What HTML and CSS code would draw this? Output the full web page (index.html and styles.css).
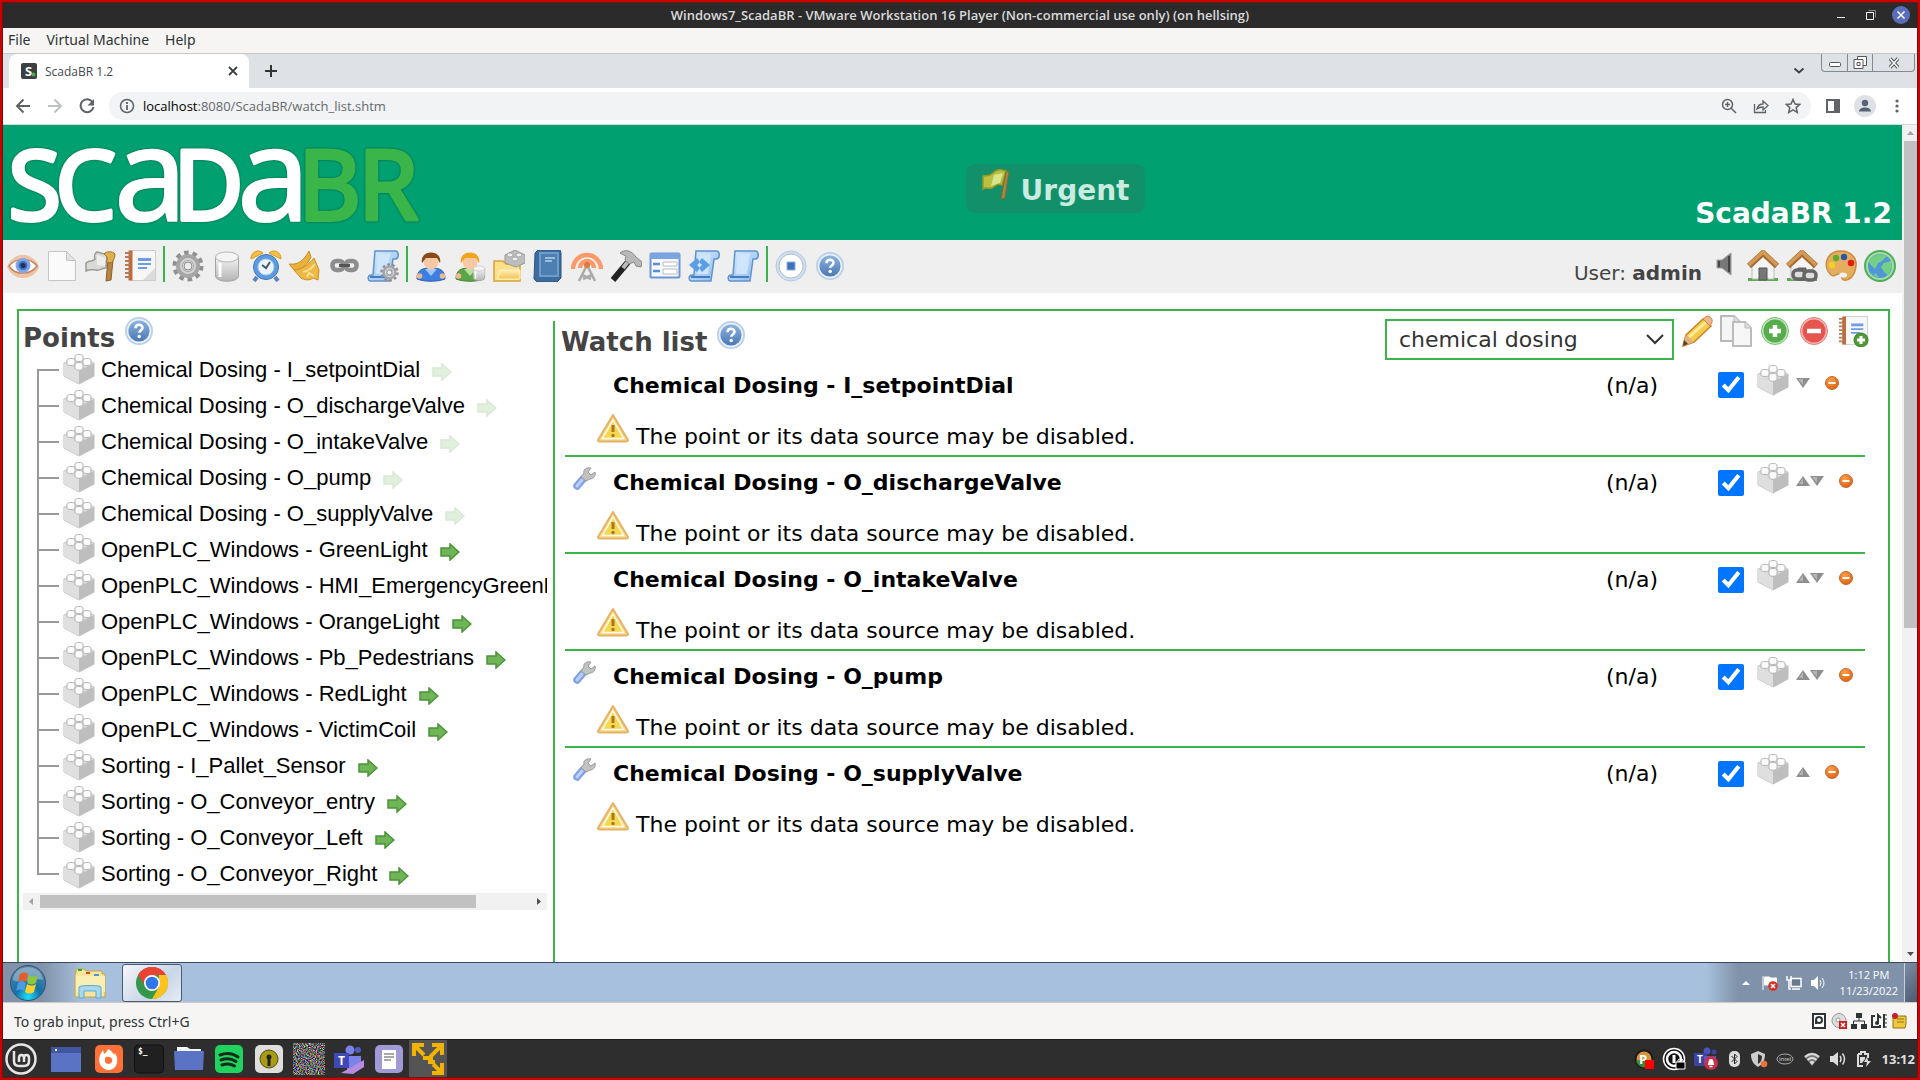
FILE: index.html
```html
<!DOCTYPE html>
<html lang="en">
<head>
<meta charset="utf-8">
<title>ScadaBR 1.2</title>
<link rel="stylesheet" href="styles.css">
</head>
<body>
<svg class="sprite" aria-hidden="true">
<defs>
<linearGradient id="gGray" x1="0" y1="0" x2="0" y2="1"><stop offset="0" stop-color="#f4f4f4"/><stop offset="1" stop-color="#b4b4b4"/></linearGradient>
<linearGradient id="gBlue" x1="0" y1="0" x2="1" y2="1"><stop offset="0" stop-color="#d9ecfd"/><stop offset="1" stop-color="#8dbcec"/></linearGradient>
<linearGradient id="gGold" x1="0" y1="0" x2="0" y2="1"><stop offset="0" stop-color="#fdeebb"/><stop offset="1" stop-color="#f3c34b"/></linearGradient>
<linearGradient id="gHelp" x1="0" y1="0" x2="0" y2="1"><stop offset="0" stop-color="#8db3de"/><stop offset="1" stop-color="#4a78b4"/></linearGradient>
<radialGradient id="gOrb" cx=".5" cy=".9" r=".9"><stop offset="0" stop-color="#1fe0ff"/><stop offset=".4" stop-color="#1272a8"/><stop offset="1" stop-color="#5f86a5"/></radialGradient>
<radialGradient id="gOrange" cx=".4" cy=".3" r=".8"><stop offset="0" stop-color="#ffa04a"/><stop offset="1" stop-color="#d95a08"/></radialGradient>
<filter id="fNoise" x="0" y="0" width="100%" height="100%" color-interpolation-filters="sRGB"><feTurbulence type="fractalNoise" baseFrequency=".9" numOctaves="2" seed="4"/><feColorMatrix values="2.2 0 0 0 -.7 0 2.2 0 0 -.7 0 0 2.2 0 -.7 0 0 0 0 1"/></filter>
<symbol id="brick" viewBox="0 0 32 32"><path d="M1 9 16 3l15 6v13l-15 8L1 22z" fill="#d6d6d6" stroke="#bcbcbc"/><path d="M16 16v14L1 22V9z" fill="#dfdfdf"/><path d="M16 16v14l15-8V9z" fill="#bebebe"/><path d="M1 9 16 2l15 7-15 8z" fill="#d9d9d9"/><g fill="#fbfbfb" stroke="#b4b4b4"><path d="M12 2v4c0 2 8 2 8 0V2c0-2-8-2-8 0z"/><path d="M4 6v4c0 2 8 2 8 0V6c0-2-8-2-8 0zM20 6v4c0 2 8 2 8 0V6c0-2-8-2-8 0zM12 10v4c0 3 8 3 8 0v-4c0-2-8-2-8 0z"/></g></symbol>
<symbol id="help" viewBox="0 0 32 32"><circle cx="16" cy="16" r="14" fill="#b9cfe8"/><circle cx="16" cy="16" r="12.300" fill="#e8f0fa"/><circle cx="16" cy="16" r="10.600" fill="url(#gHelp)"/><path d="M12.500 13.200c0-4.600 7-4.400 7-.4 0 2.600-3.300 2.600-3.300 5" fill="none" stroke="#fff" stroke-width="2.600"/><circle cx="16.200" cy="21.500" r="1.700" fill="#fff"/></symbol>
<symbol id="eye" viewBox="0 0 32 32"><path d="M0 17C4 8 11 4 18 5c7 1 12 6 14 12-2 6-8 11-16 11S3 23 0 17z" fill="#ecc3a5"/><path d="M2 16C8 8 23 7 30 16c-6 9-22 10-28 0z" fill="#fff" stroke="#c98561" stroke-width="1.500"/><circle cx="16" cy="15.500" r="7.500" fill="#7fa6e6"/><circle cx="16" cy="15.500" r="4.500" fill="#446fc0"/><circle cx="16" cy="15.500" r="2.500" fill="#1b2f62"/></symbol>
<symbol id="page" viewBox="0 0 32 32"><path d="M2.500 1.500h18l9 9v20h-27z" fill="#fafafa" stroke="#c4c4c4"/><path d="M20.500 1.500v9h9z" fill="#e2e2e2" stroke="#c4c4c4"/></symbol>
<symbol id="flag" viewBox="0 0 32 32"><path d="M1 13c5-4 5 0 9-4-1-3 0-6 2-7 3 1 6 2 10 2l-1 14c-4 0-6 3-10 2-4 0-6-1-10 1z" fill="#d9d9d6" stroke="#9b9b96" stroke-width="1.500"/><path d="m12 5 9 3-1 8-8-1z" fill="#ededeb"/><path d="M23 10h5l-2 20-5 1z" fill="#b5843f" stroke="#8c6029"/><path d="M19 4c2-3 9-3 11 0 0 4-2 7-4 9l-5-1c2-3 2-5-2-8z" fill="#dfb04f" stroke="#a0752d"/></symbol>
<symbol id="yellowflag" viewBox="0 0 32 32"><path d="M2 7c4-1 6 1 10-3s7-4 13-2l-4 14c-4-2-6 0-10 3-3 1-6-1-9 1z" fill="#b9c042" stroke="#969a22" stroke-width="1.500"/><path d="m13 6 9-2-3 10-9 3z" fill="#d8e48e"/><path d="M25 3 28 2l-4 27-4 1z" fill="#a98746" stroke="#7b6f2e"/></symbol>
<symbol id="report" viewBox="0 0 32 32"><path d="M7.500.5h24v30h-24z" fill="#f7f7f7" stroke="#ccc"/><path d="M4.500.5h4v30h-4z" fill="#bd6a3c"/><path d="M1 3h5M1 7h5M1 11h5M1 15h5M1 19h5M1 23h5M1 27h5" stroke="#b77b5a" stroke-width="2"/><path d="M14 8h13v3H14zm0 5h13v2H14zm0 4h9v2h-9z" fill="#6e9ce4"/><path d="m19 30 12-12v12z" fill="#dcdcdc"/></symbol>
<symbol id="gear" viewBox="0 0 32 32"><circle cx="16" cy="16" r="12.500" fill="none" stroke="#909090" stroke-width="6" stroke-dasharray="4.200 3.650"/><circle cx="16" cy="16" r="8.500" fill="none" stroke="#a6a6a6" stroke-width="7"/><circle cx="16" cy="16" r="7" fill="none" stroke="#d4d4d4" stroke-width="2"/><circle cx="16" cy="16" r="4" fill="#ededed" stroke="#888"/></symbol>
<symbol id="cylinder" viewBox="0 0 32 32"><path d="M4.500 7v19c0 7 23 7 23 0V7z" fill="url(#gGray)" stroke="#a5a5a5"/><ellipse cx="16" cy="7" rx="11.500" ry="5" fill="#f5f5f5" stroke="#b5b5b5"/><path d="M9 13v14" stroke="#fff" stroke-width="3"/></symbol>
<symbol id="clock" viewBox="0 0 32 32"><path d="m7 27-3 4M25 27l3 4" stroke="#5d86bd" stroke-width="4"/><path d="M1 9C1 1 9-1 13 3zM31 9C31 1 23-1 19 3z" fill="#f5c043" stroke="#d99a1d"/><circle cx="16" cy="17" r="12.500" fill="#5d9be0" stroke="#3f76b8"/><circle cx="16" cy="17" r="8" fill="#e9f4fd" stroke="#a9cbed"/><path d="m12 15 4 3 4-6" fill="none" stroke="#48586b" stroke-width="2"/></symbol>
<symbol id="horn" viewBox="0 0 32 32"><path d="M0 14c8 1 14-2 20-13l2 6c-4 9-10 12-16 14z" fill="#e9b03c" stroke="#c98d20"/><path d="M5 20c9-1 14-5 20-12l5 12-1 10-5-2c-4 3-8 2-12 0z" fill="#edb844" stroke="#cc8f20"/><path d="M14 22c6-1 9-4 12-8M18 27l2-4 5 3" fill="none" stroke="#fbe09a" stroke-width="2"/></symbol>
<symbol id="link" viewBox="0 0 32 32"><g fill="none" stroke="#8d8d8d" stroke-width="4.500"><rect x="4.500" y="11" width="11" height="9" rx="4"/><rect x="17.500" y="11" width="11" height="9" rx="4"/></g><path d="M11 15.500h11" stroke="#555" stroke-width="3"/></symbol>
<symbol id="scroll" viewBox="0 0 32 32"><path d="M8 1h21c3 1 3 7 0 8h-3l-3 22H3c-3-1-2-6 1-6h2z" fill="url(#gBlue)" stroke="#5d93cf" stroke-width="1.500"/><path d="M11 4h12l-3 20H9z" fill="#cfe5fb"/><path d="M3 27h19" stroke="#447cc0" stroke-width="2"/></symbol>
<symbol id="scrollgear" viewBox="0 0 32 32"><use href="#scroll"/><use href="#gear" x="13" y="13" width="19" height="19"/></symbol>
<symbol id="scrollcode" viewBox="0 0 32 32"><use href="#scroll"/><path d="m9 8-8 7 8 7 3-4-3-3 3-3zM14 8l8 7-8 7-3-4 3-3-3-3z" fill="#5a9fe6"/></symbol>
<symbol id="user" viewBox="0 0 32 32"><path d="M2 29c0-9 5-11 14-11s14 2 14 11c-8 3-20 3-28 0z" fill="#3c7fe0" stroke="#2b61b4"/><path d="m10 19 6 7 6-7z" fill="#9fc9fb"/><circle cx="4.500" cy="26" r="2.800" fill="#f0b890"/><circle cx="27.500" cy="26" r="2.800" fill="#f0b890"/><ellipse cx="16" cy="11.500" rx="7.500" ry="8" fill="#f6c8a4"/><path d="M7 13C4-1 28-1 25 13l-3-5H11z" fill="#8a4a1a"/></symbol>
<symbol id="userdb" viewBox="0 0 32 32"><path d="M2 29c0-9 5-11 14-11s14 2 14 11c-8 3-20 3-28 0z" fill="#5ca548" stroke="#43822f"/><path d="m10 19 6 7 6-7z" fill="#b7e29c"/><circle cx="4.500" cy="26" r="2.800" fill="#f0b890"/><ellipse cx="16" cy="11.500" rx="7.500" ry="8" fill="#f6c8a4"/><path d="M7 13C4-1 28-1 25 13l-3-5H11z" fill="#f0a51e"/><use href="#cylinder" x="17" y="14" width="16" height="18"/></symbol>
<symbol id="folder" viewBox="0 0 32 32"><path d="M1 31V11h9l3 3h14v17z" fill="#fbe08a" stroke="#d7a43a" stroke-width="1.500"/><path d="M7 20h20v9H5z" fill="url(#gGold)" stroke="#fff3c4"/><path d="M12 5l10-5 10 5v8l-9 4-11-4z" fill="#bdbdbd" stroke="#999"/><g fill="#efefef" stroke="#aaa"><ellipse cx="17" cy="5" rx="3" ry="2"/><ellipse cx="26" cy="5" rx="3" ry="2"/><ellipse cx="22" cy="9" rx="3" ry="2"/></g></symbol>
<symbol id="book" viewBox="0 0 32 32"><path d="M3 3 6 0h22l1 3v25l-4 4H5l-3-3z" fill="#3e6c9f" stroke="#2c5584"/><path d="M7 2h20v25H7z" fill="#6e9cca"/><path d="M9 4h16v21H9z" fill="#4d7fb3"/><path d="M13 8h10M13 11h7" stroke="#b7d3ec" stroke-width="1.500"/></symbol>
<symbol id="antenna" viewBox="0 0 32 32"><path d="M2 19a14 14 0 1 1 28 0M9 18a7 7 0 1 1 14 0" fill="none" stroke="#fb9a68" stroke-width="4.500"/><path d="m8 31 8-16 8 16M11 25l9 4M21 25l-9 4" fill="none" stroke="#aaa" stroke-width="2.500"/><circle cx="16" cy="15" r="3" fill="#e07841"/></symbol>
<symbol id="hammer" viewBox="0 0 32 32"><path d="M18 12 3 30" stroke="#222" stroke-width="6"/><path d="m20 9-7 9" stroke="#bbb" stroke-width="4"/><path d="M10 3c5-4 11-3 16 4l6 5-1 5-5-1-2-4-5 2-4-4 1-4z" fill="#b9b9b9" stroke="#888"/></symbol>
<symbol id="form" viewBox="0 0 32 32"><rect x="1.500" y="3.500" width="29" height="24" rx="1" fill="#f5f9fe" stroke="#6b96d4" stroke-width="2"/><path d="M1 3h30v6H1z" fill="#7ba4e0"/><path d="M4 14h7M4 21h7" stroke="#5d8ad0" stroke-width="2.500"/><path d="M14 12h14v4H14zM14 19h14v5H14z" fill="#fff" stroke="#bbb"/></symbol>
<symbol id="stop" viewBox="0 0 32 32"><circle cx="16" cy="16" r="15" fill="#cfdff3" stroke="#b1c9e8"/><circle cx="16" cy="16" r="12" fill="#fff" stroke="#b9b9b9"/><path d="M12 12h8v8h-8z" fill="#3f72b8" stroke="#8db0dd"/></symbol>
<symbol id="speaker" viewBox="0 0 24 24"><path d="M3 8h5l9-7v22l-9-7H3z" fill="#777" stroke="#999"/><path d="M15 4v16M5 9v6" stroke="#444" stroke-width="2"/></symbol>
<symbol id="home" viewBox="0 0 32 32"><path d="M1 28h30v3H1z" fill="#5da850"/><path d="M5 14 16 4l11 10v15H5z" fill="#f4f4f4" stroke="#bbb"/><path d="M12 18h8v12h-8z" fill="#777" stroke="#555"/><path d="M2 16 16 3l14 13" fill="none" stroke="#a66d32" stroke-width="6"/><path d="M2 15 16 2l14 13" fill="none" stroke="#d39a56" stroke-width="3.500"/></symbol>
<symbol id="homelink" viewBox="0 0 32 32"><use href="#home"/><g fill="#ddd" stroke="#666" stroke-width="3.500"><rect x="7" y="20" width="12" height="9" rx="4"/><rect x="18" y="21" width="12" height="9" rx="4"/></g></symbol>
<symbol id="palette" viewBox="0 0 32 32"><path d="M16 1c10 0 16 7 15 15-1 10-7 15-12 14-4-1-1-5-4-6-5-1-5 4-9 1-9-8-5-24 10-24z" fill="#e5ad60" stroke="#c88c3c" stroke-width="1.500"/><circle cx="11" cy="8" r="3.200" fill="#5cae2a"/><circle cx="19" cy="7" r="3.200" fill="#2c55a8"/><circle cx="26" cy="13" r="3.300" fill="#e51c16"/><circle cx="7" cy="15" r="3.200" fill="#efd122"/><ellipse cx="18" cy="25" rx="4" ry="2.500" fill="#efefef"/></symbol>
<symbol id="globe" viewBox="0 0 32 32"><circle cx="16" cy="16" r="15" fill="#a5dba5" stroke="#4fae58" stroke-width="2"/><circle cx="16" cy="16" r="12" fill="#4f97d6"/><path d="M5 11c4-7 12-8 18-5l-5 5-4 2-3 6-5-5zM20 13l7-2 1 6-4 8-4-3-3-5zM11 23l4 4-5-1z" fill="#74d084"/></symbol>
<symbol id="pencil" viewBox="0 0 32 32"><path d="M2 31 5 20 22 4l8 7-17 16z" fill="#f6cb4c" stroke="#c8842c" stroke-width="1.500"/><path d="m8 22 17-15" stroke="#fdeb9e" stroke-width="3"/><path d="m22 4 4-3c3 0 6 3 5 6l-2 4z" fill="#f0b68b" stroke="#c48450"/><path d="m2 31 3-11 8 7z" fill="#dfb283"/><path d="m2 31 1-6 4 4z" fill="#5c3b20"/></symbol>
<symbol id="copy" viewBox="0 0 32 32"><path d="M1 1h13l6 6v19H1z" fill="#f5f5f5" stroke="#b9b9b9" stroke-width="2"/><path d="M14 1v6h6" fill="#ddd" stroke="#bbb"/><path d="M13 7h12l6 6v18H13z" fill="#f7f7f7" stroke="#bcbcbc" stroke-width="2"/><path d="M25 7v6h6" fill="#ddd" stroke="#bbb"/></symbol>
<symbol id="plus" viewBox="0 0 32 32"><circle cx="16" cy="16" r="13.500" fill="#c5e6c0" stroke="#7cbf74"/><circle cx="16" cy="16" r="11.500" fill="#57ad4b"/><path d="M16 10v12M10 16h12" stroke="#fff" stroke-width="4.500"/></symbol>
<symbol id="minus" viewBox="0 0 32 32"><circle cx="16" cy="16" r="13.500" fill="#f6b8b4" stroke="#e57e78"/><circle cx="16" cy="16" r="11.500" fill="#e5554e"/><path d="M9 16h14" stroke="#fff" stroke-width="4.500"/></symbol>
<symbol id="reportadd" viewBox="0 0 32 32"><use href="#report" x="1" width="30" height="32"/><circle cx="24" cy="25" r="7" fill="#4f9a35" stroke="#3d7f28"/><path d="M24 21v8M20 25h8" stroke="#fff" stroke-width="3"/></symbol>
<symbol id="warning" viewBox="0 0 32 32"><path d="M16 3 31 28q0 1.500-2 1.500H3q-2 0-2-1.500z" fill="#f8d98e" stroke="#e6b263" stroke-width="2" stroke-linejoin="round"/><path d="M16 8 26.500 26.500h-21z" fill="#f6d752" stroke="#fffbe6" stroke-width="1.500"/><path d="M16 13v7" stroke="#a97720" stroke-width="3"/><circle cx="16" cy="23.500" r="1.700" fill="#a97720"/></symbol>
<symbol id="wrench" viewBox="0 0 24 24"><path d="m5 19 6-7" stroke="#7fa1e8" stroke-width="7.500" stroke-linecap="round"/><path d="m5 19 5-6" stroke="#bcd0f8" stroke-width="3" stroke-linecap="round"/><path d="m9 10 5 4 4-2c4 0 6-4 5-7l-4 3-3-3 3-4c-5-1-8 2-7 5z" fill="#c2c2c2" stroke="#999"/></symbol>
<symbol id="arrow" viewBox="0 0 20 18"><path d="M1 5h9V1l9 8-9 8v-4H1z" fill="#6fb558" stroke="#4a9436" stroke-width="1.500"/></symbol>
<symbol id="up" viewBox="0 0 14 14"><path d="m0 12 7-10 7 10z" fill="#8e8e8e"/><path d="m3 10 4-6v6z" fill="#b4b4b4"/></symbol>
<symbol id="down" viewBox="0 0 14 14"><path d="m0 2 7 10 7-10z" fill="#8e8e8e"/><path d="M2 3h5v6z" fill="#b4b4b4"/></symbol>
<symbol id="remove" viewBox="0 0 14 14"><circle cx="7" cy="7" r="6.500" fill="url(#gOrange)" stroke="#c46a36"/><path d="M3.500 7h7" stroke="#fff" stroke-width="2"/></symbol>
</defs>
</svg>

<header class="titlebar">
  <span class="titlebar-text">Windows7_ScadaBR - VMware Workstation 16 Player (Non-commercial use only) (on hellsing)</span>
  <div class="window-buttons">
    <button aria-label="Minimize"><svg width="18" height="18" viewBox="0 0 18 18"><path d="M5 11.500h8" stroke="#eee"/></svg></button>
    <button aria-label="Restore"><svg width="18" height="18" viewBox="0 0 18 18"><path d="M6.500 4.500h7v7" fill="none" stroke="#888"/><path d="M4.500 6.500h7v7h-7z" fill="none" stroke="#fff"/></svg></button>
    <button aria-label="Close"><svg width="18" height="18" viewBox="0 0 18 18"><circle cx="9" cy="9" r="9" fill="#5b6cb8"/><path d="m5.500 5.500 7 7m0-7-7 7" stroke="#fff" stroke-width="1.500"/></svg></button>
  </div>
</header>

<nav class="menubar"><button>File</button><button>Virtual Machine</button><button>Help</button></nav>

<div class="tabstrip">
  <div class="tab">
    <svg width="16" height="16" viewBox="0 0 16 16"><rect width="16" height="16" rx="2" fill="#3c4043"/><text x="4" y="13" class="favicon-letter">S</text><circle cx="12.500" cy="11.500" r="2" fill="#3fb54a"/></svg>
    <span class="tab-title">ScadaBR 1.2</span>
    <button aria-label="Close tab"><svg width="10" height="10" viewBox="0 0 10 10"><path d="m1 1 8 8m0-8L1 9" stroke="#3c4043" stroke-width="1.800"/></svg></button>
  </div>
  <button class="newtab" aria-label="New tab"><svg width="12" height="12" viewBox="0 0 12 12"><path d="M6 0v12M0 6h12" stroke="#333" stroke-width="2"/></svg></button>
  <button class="tabsearch" aria-label="Search tabs"><svg width="12" height="8" viewBox="0 0 12 8"><path d="m1.500 1.500 4.500 4 4.500-4" fill="none" stroke="#444" stroke-width="2"/></svg></button>
  <div class="guest-buttons">
    <button aria-label="Minimize"><svg width="12" height="12" viewBox="0 0 12 12"><rect x=".5" y="5.500" width="11" height="4" rx="1" fill="#fff" stroke="#555"/></svg></button>
    <button aria-label="Restore"><svg width="14" height="14" viewBox="0 0 14 14"><path d="M4.500.5h9v9h-9z" fill="#fff" stroke="#555"/><path d="M1 3.500h9v9H1z" fill="#fff" stroke="#555"/><path d="M4 6.500h3v3H4z" fill="#fff" stroke="#555"/></svg></button>
    <button aria-label="Close"><svg width="12" height="12" viewBox="0 0 12 12"><path d="m2 1.500 8 9m0-9-8 9" stroke="#555" stroke-width="3.500"/><path d="m2 1.500 8 9m0-9-8 9" stroke="#fff" stroke-width="1.500"/></svg></button>
  </div>
</div>

<div class="addressbar">
  <button aria-label="Back"><svg width="16" height="16" viewBox="0 0 16 16"><path d="M15 8H2m6.500-6.500L2 8l6.500 6.500" fill="none" stroke="#5f6368" stroke-width="2"/></svg></button>
  <button aria-label="Forward"><svg width="16" height="16" viewBox="0 0 16 16"><path d="M1 8h13M7.500 1.500 14 8l-6.500 6.500" fill="none" stroke="#bdc1c6" stroke-width="2"/></svg></button>
  <button aria-label="Reload"><svg width="16" height="16" viewBox="0 0 16 16"><path d="M13.500 4A6.500 6.500 0 1 0 14.500 9" fill="none" stroke="#5f6368" stroke-width="2"/><path d="M15 1v6.500H8.500z" fill="#5f6368"/></svg></button>
  <div class="omnibox">
    <svg width="16" height="16" viewBox="0 0 16 16"><circle cx="8" cy="8" r="6.500" fill="none" stroke="#5f6368" stroke-width="1.500"/><path d="M8 7v5M8 4v2" stroke="#5f6368" stroke-width="1.800"/></svg>
    <a class="url" href="#"><span>localhost</span>:8080/ScadaBR/watch_list.shtm</a>
    <div class="omnibox-actions">
      <button aria-label="Zoom"><svg width="16" height="16" viewBox="0 0 16 16"><circle cx="6.500" cy="6.500" r="5" fill="none" stroke="#5f6368" stroke-width="1.500"/><path d="m10 10 5 5M6.500 4v5M4 6.500h5" stroke="#5f6368" stroke-width="1.500"/></svg></button>
      <button aria-label="Share"><svg width="16" height="16" viewBox="0 0 16 16"><path d="M1.500 6v8.500h11V12M4 11c1-4 3-5 6-5V3l5 4.500-5 4.500V9c-3 0-4 .5-6 2z" fill="none" stroke="#5f6368" stroke-width="1.300"/></svg></button>
      <button aria-label="Bookmark"><svg width="16" height="16" viewBox="0 0 16 16"><path d="m8 1.500 2 4.500 4.800.400-3.600 3.200 1.100 4.800L8 11.900l-4.300 2.500 1.100-4.800L1.200 6.400 6 6z" fill="none" stroke="#5f6368" stroke-width="1.500"/></svg></button>
    </div>
  </div>
  <div class="browser-actions">
    <button aria-label="Side panel"><svg width="16" height="16" viewBox="0 0 16 16"><path d="M2 2h12v12H2z" fill="#fff" stroke="#5f6368" stroke-width="2"/><path d="M9 1h6v14H9z" fill="#5f6368"/></svg></button>
    <button aria-label="Profile"><svg width="22" height="22" viewBox="0 0 22 22"><circle cx="11" cy="11" r="11" fill="#dee1e6"/><circle cx="11" cy="8" r="3.200" fill="#566276"/><path d="M5 16.500c0-5.500 12-5.500 12 0z" fill="#566276"/></svg></button>
    <button aria-label="More"><svg width="16" height="16" viewBox="0 0 16 16" fill="#5f6368"><circle cx="8" cy="3" r="1.600"/><circle cx="8" cy="8" r="1.600"/><circle cx="8" cy="13" r="1.600"/></svg></button>
  </div>
</div>

<div class="viewport">
  <main class="page">
    <div class="banner">
      <svg class="logo" width="406" height="82" viewBox="0 0 406 82" role="img" aria-label="ScadaBR">
        <g class="logo-white"><text y="75" x="-1">S</text><text y="75" x="46">C</text><text class="logo-a" y="76" x="105">a</text><text y="75" x="164">D</text><text class="logo-a" y="76" x="228">a</text></g>
        <g class="logo-green"><text y="75" x="289">B</text><text y="75" x="349">R</text></g>
      </svg>
      <a class="urgent" href="#"><svg width="32" height="32"><use href="#yellowflag"/></svg><span>Urgent</span></a>
      <span class="product">ScadaBR 1.2</span>
    </div>

    <div class="toolbar">
      <a href="#" title="Watch list"><svg class="icon"><use href="#eye"/></svg></a>
      <a href="#" title="Views"><svg class="icon"><use href="#page"/></svg></a>
      <a href="#" title="Alarms"><svg class="icon"><use href="#flag"/></svg></a>
      <a href="#" title="Reports"><svg class="icon"><use href="#report"/></svg></a>
      <span class="separator"></span>
      <a href="#" title="Event handlers"><svg class="icon"><use href="#gear"/></svg></a>
      <a href="#" title="Data sources"><svg class="icon"><use href="#cylinder"/></svg></a>
      <a href="#" title="Scheduled events"><svg class="icon"><use href="#clock"/></svg></a>
      <a href="#" title="Compound events"><svg class="icon"><use href="#horn"/></svg></a>
      <a href="#" title="Point links"><svg class="icon"><use href="#link"/></svg></a>
      <a href="#" title="Scripting"><svg class="icon"><use href="#scrollgear"/></svg></a>
      <span class="separator"></span>
      <a href="#" title="Users"><svg class="icon"><use href="#user"/></svg></a>
      <a href="#" title="User profiles"><svg class="icon"><use href="#userdb"/></svg></a>
      <a href="#" title="Point hierarchy"><svg class="icon"><use href="#folder"/></svg></a>
      <a href="#" title="Mailing lists"><svg class="icon"><use href="#book"/></svg></a>
      <a href="#" title="Publishers"><svg class="icon"><use href="#antenna"/></svg></a>
      <a href="#" title="Maintenance"><svg class="icon"><use href="#hammer"/></svg></a>
      <a href="#" title="System settings"><svg class="icon"><use href="#form"/></svg></a>
      <a href="#" title="Import and export"><svg class="icon"><use href="#scrollcode"/></svg></a>
      <a href="#" title="SQL"><svg class="icon"><use href="#scroll"/></svg></a>
      <span class="separator"></span>
      <a href="#" title="Logout"><svg class="icon"><use href="#stop"/></svg></a>
      <a href="#" title="Help"><svg class="icon"><use href="#help"/></svg></a>
      <span class="user">User: <b>admin</b></span>
      <button class="mute" aria-label="Mute"><svg width="24" height="24"><use href="#speaker"/></svg></button>
      <a href="#" title="Home"><svg class="icon"><use href="#home"/></svg></a>
      <a href="#" title="Set home"><svg class="icon"><use href="#homelink"/></svg></a>
      <a href="#" title="Theme"><svg class="icon"><use href="#palette"/></svg></a>
      <a href="#" title="Language"><svg class="icon"><use href="#globe"/></svg></a>
    </div>

    <div class="panel">
      <section class="points">
        <div class="heading"><h2>Points</h2><button aria-label="Points help"><svg class="icon"><use href="#help"/></svg></button></div>
        <ul class="tree">
          <li><i class="branch"></i><svg class="icon"><use href="#brick"/></svg><span>Chemical Dosing - I_setpointDial</span><button class="add" disabled aria-label="Add"><svg><use href="#arrow"/></svg></button></li>
          <li><i class="branch"></i><svg class="icon"><use href="#brick"/></svg><span>Chemical Dosing - O_dischargeValve</span><button class="add" disabled aria-label="Add"><svg><use href="#arrow"/></svg></button></li>
          <li><i class="branch"></i><svg class="icon"><use href="#brick"/></svg><span>Chemical Dosing - O_intakeValve</span><button class="add" disabled aria-label="Add"><svg><use href="#arrow"/></svg></button></li>
          <li><i class="branch"></i><svg class="icon"><use href="#brick"/></svg><span>Chemical Dosing - O_pump</span><button class="add" disabled aria-label="Add"><svg><use href="#arrow"/></svg></button></li>
          <li><i class="branch"></i><svg class="icon"><use href="#brick"/></svg><span>Chemical Dosing - O_supplyValve</span><button class="add" disabled aria-label="Add"><svg><use href="#arrow"/></svg></button></li>
          <li><i class="branch"></i><svg class="icon"><use href="#brick"/></svg><span>OpenPLC_Windows - GreenLight</span><button class="add" aria-label="Add"><svg><use href="#arrow"/></svg></button></li>
          <li><i class="branch"></i><svg class="icon"><use href="#brick"/></svg><span>OpenPLC_Windows - HMI_EmergencyGreenLight</span><button class="add" aria-label="Add"><svg><use href="#arrow"/></svg></button></li>
          <li><i class="branch"></i><svg class="icon"><use href="#brick"/></svg><span>OpenPLC_Windows - OrangeLight</span><button class="add" aria-label="Add"><svg><use href="#arrow"/></svg></button></li>
          <li><i class="branch"></i><svg class="icon"><use href="#brick"/></svg><span>OpenPLC_Windows - Pb_Pedestrians</span><button class="add" aria-label="Add"><svg><use href="#arrow"/></svg></button></li>
          <li><i class="branch"></i><svg class="icon"><use href="#brick"/></svg><span>OpenPLC_Windows - RedLight</span><button class="add" aria-label="Add"><svg><use href="#arrow"/></svg></button></li>
          <li><i class="branch"></i><svg class="icon"><use href="#brick"/></svg><span>OpenPLC_Windows - VictimCoil</span><button class="add" aria-label="Add"><svg><use href="#arrow"/></svg></button></li>
          <li><i class="branch"></i><svg class="icon"><use href="#brick"/></svg><span>Sorting - I_Pallet_Sensor</span><button class="add" aria-label="Add"><svg><use href="#arrow"/></svg></button></li>
          <li><i class="branch"></i><svg class="icon"><use href="#brick"/></svg><span>Sorting - O_Conveyor_entry</span><button class="add" aria-label="Add"><svg><use href="#arrow"/></svg></button></li>
          <li><i class="branch"></i><svg class="icon"><use href="#brick"/></svg><span>Sorting - O_Conveyor_Left</span><button class="add" aria-label="Add"><svg><use href="#arrow"/></svg></button></li>
          <li><i class="branch"></i><svg class="icon"><use href="#brick"/></svg><span>Sorting - O_Conveyor_Right</span><button class="add" aria-label="Add"><svg><use href="#arrow"/></svg></button></li>
        </ul>
        <div class="hscroll"><svg width="17" height="17" viewBox="0 0 17 17"><path d="M10 5v7L6 8.500z" fill="#a3a3a3"/></svg><div class="hscroll-track"><div class="hscroll-thumb"></div></div><svg width="17" height="17" viewBox="0 0 17 17"><path d="M7 5v7l4-3.500z" fill="#505050"/></svg></div>
      </section>
      <div class="divider"></div>
      <section class="watch">
        <div class="watch-head">
          <div class="heading"><h2>Watch list</h2><button aria-label="Watch list help"><svg class="icon"><use href="#help"/></svg></button></div>
          <div class="picker">
            <select aria-label="Watch list"><option>chemical dosing</option></select>
            <svg width="18" height="12" viewBox="0 0 18 12"><path d="m1 2 8 8 8-8" fill="none" stroke="#333" stroke-width="2"/></svg>
          </div>
          <div class="actions">
            <button aria-label="Rename"><svg class="icon"><use href="#pencil"/></svg></button>
            <button aria-label="Copy"><svg class="icon"><use href="#copy"/></svg></button>
            <button aria-label="Add list"><svg class="icon"><use href="#plus"/></svg></button>
            <button aria-label="Delete list"><svg class="icon"><use href="#minus"/></svg></button>
            <button aria-label="Create report"><svg class="icon"><use href="#reportadd"/></svg></button>
          </div>
        </div>
        <table class="watch-table">
          <colgroup><col class="col-tool"><col><col class="col-value"><col class="col-check"><col class="col-icons"></colgroup>
          <tbody>
            <tr class="point"><td></td><th scope="row">Chemical Dosing - I_setpointDial</th><td>(n/a)</td><td><input type="checkbox" checked aria-label="Chart I_setpointDial"></td><td class="tools"><div><svg class="icon"><use href="#brick"/></svg><button aria-label="Move down"><svg><use href="#down"/></svg></button><button class="remove" aria-label="Remove"><svg><use href="#remove"/></svg></button></div></td></tr>
            <tr class="note"><td colspan="5"><div><svg class="icon"><use href="#warning"/></svg>The point or its data source may be disabled.</div></td></tr>
          </tbody>
          <tbody>
            <tr class="point"><td class="tool"><button aria-label="Set value"><svg><use href="#wrench"/></svg></button></td><th scope="row">Chemical Dosing - O_dischargeValve</th><td>(n/a)</td><td><input type="checkbox" checked aria-label="Chart O_dischargeValve"></td><td class="tools"><div><svg class="icon"><use href="#brick"/></svg><button aria-label="Move up"><svg><use href="#up"/></svg></button><button aria-label="Move down"><svg><use href="#down"/></svg></button><button class="remove" aria-label="Remove"><svg><use href="#remove"/></svg></button></div></td></tr>
            <tr class="note"><td colspan="5"><div><svg class="icon"><use href="#warning"/></svg>The point or its data source may be disabled.</div></td></tr>
          </tbody>
          <tbody>
            <tr class="point"><td></td><th scope="row">Chemical Dosing - O_intakeValve</th><td>(n/a)</td><td><input type="checkbox" checked aria-label="Chart O_intakeValve"></td><td class="tools"><div><svg class="icon"><use href="#brick"/></svg><button aria-label="Move up"><svg><use href="#up"/></svg></button><button aria-label="Move down"><svg><use href="#down"/></svg></button><button class="remove" aria-label="Remove"><svg><use href="#remove"/></svg></button></div></td></tr>
            <tr class="note"><td colspan="5"><div><svg class="icon"><use href="#warning"/></svg>The point or its data source may be disabled.</div></td></tr>
          </tbody>
          <tbody>
            <tr class="point"><td class="tool"><button aria-label="Set value"><svg><use href="#wrench"/></svg></button></td><th scope="row">Chemical Dosing - O_pump</th><td>(n/a)</td><td><input type="checkbox" checked aria-label="Chart O_pump"></td><td class="tools"><div><svg class="icon"><use href="#brick"/></svg><button aria-label="Move up"><svg><use href="#up"/></svg></button><button aria-label="Move down"><svg><use href="#down"/></svg></button><button class="remove" aria-label="Remove"><svg><use href="#remove"/></svg></button></div></td></tr>
            <tr class="note"><td colspan="5"><div><svg class="icon"><use href="#warning"/></svg>The point or its data source may be disabled.</div></td></tr>
          </tbody>
          <tbody>
            <tr class="point"><td class="tool"><button aria-label="Set value"><svg><use href="#wrench"/></svg></button></td><th scope="row">Chemical Dosing - O_supplyValve</th><td>(n/a)</td><td><input type="checkbox" checked aria-label="Chart O_supplyValve"></td><td class="tools"><div><svg class="icon"><use href="#brick"/></svg><button aria-label="Move up"><svg><use href="#up"/></svg></button><button class="remove" aria-label="Remove"><svg><use href="#remove"/></svg></button></div></td></tr>
            <tr class="note"><td colspan="5"><div><svg class="icon"><use href="#warning"/></svg>The point or its data source may be disabled.</div></td></tr>
          </tbody>
        </table>
      </section>
    </div>
  </main>
  <div class="vscroll"><svg width="16" height="16" viewBox="0 0 16 16"><path d="M5 10h7L8.500 6z" fill="#a3a3a3"/></svg><div class="vscroll-track"><div class="vscroll-thumb"></div></div><svg width="16" height="16" viewBox="0 0 16 16"><path d="M5 6h7l-3.500 4z" fill="#505050"/></svg></div>
</div>

<div class="taskbar">
  <button aria-label="Start"><svg width="36" height="36" viewBox="0 0 36 36"><circle cx="18" cy="18" r="17.500" fill="url(#gOrb)" stroke="#31506f"/><path d="M3 15C4-2 32-2 33 15c-8-3-22 5-30 0z" fill="#fff" opacity=".3"/><path d="M10 9c3-2 5-2 8 0l-2 8c-3-2-5-2-8 0z" fill="#ea5b28"/><path d="M19 10c3 2 6 2 9 0l-2 8c-3 2-6 2-9 0z" fill="#8dc63f"/><path d="M8 18c3-2 5-2 8 0l-2 8c-3-2-5-2-8 0z" fill="#4d9be2"/><path d="M17 19c3 2 6 2 9 0l-2 8c-3 2-6 2-9 0z" fill="#fbd12a"/></svg></button>
  <button class="explorer" aria-label="Windows Explorer"><svg width="32" height="32" viewBox="0 0 32 32"><path d="M2 6V2h8l2 2h16v3h3v23H1V6z" fill="#f6e59a" stroke="#c5a64b"/><path d="M4 2h4v2H4z" fill="#29a829"/><path d="M12 5h4v2h-4z" fill="#d24726"/><path d="M20 7h5v2h-5z" fill="#4696d2"/><path d="M2 9h29v16H2z" fill="#f9eeb4"/><path d="M5 31V20c0-2 22-2 22 0v11h-5v-7H10v7z" fill="#a7d8ee" stroke="#5fa9cf"/></svg></button>
  <button class="task-active" aria-label="Google Chrome"><svg width="32" height="32" viewBox="0 0 32 32"><circle cx="16" cy="16" r="16" fill="#34974a"/><path d="M16 0a16 16 0 0 1 14 8H16L8 17 2 8A16 16 0 0 1 16 0z" fill="#ea4335"/><path d="M30 8a16 16 0 0 1-14 24l7-12V8z" fill="#fcc31e"/><circle cx="16" cy="16" r="8" fill="#fff"/><circle cx="16" cy="16" r="6.300" fill="#2f76ea"/></svg></button>
  <div class="tray">
    <svg width="16" height="16" viewBox="0 0 16 16"><path d="m4 10 4-4 4 4z" fill="#fff"/></svg>
    <svg width="16" height="16" viewBox="0 0 16 16"><path d="M1 1v14M2.500 2h5l1 1h6v7h-12z" fill="#fff" stroke="#fff"/><circle cx="11" cy="11" r="4.800" fill="#d62d20"/><path d="m9 9 4 4m0-4-4 4" stroke="#fff" stroke-width="1.500"/></svg>
    <svg width="16" height="16" viewBox="0 0 16 16"><path d="M5 3.500h10v8H5z" fill="#687a92" stroke="#fff" stroke-width="1.500"/><path d="M6 14h8M3 5v9h2M1 1v4h4V1" fill="none" stroke="#fff" stroke-width="1.500"/></svg>
    <svg width="16" height="16" viewBox="0 0 16 16"><path d="M1 5h3l4-4v14l-4-4H1z" fill="#fff"/><path d="M10 5q2 3 0 6M12 3q4 5 0 10" fill="none" stroke="#fff"/></svg>
    <div class="guest-clock">1:12 PM<br>11/23/2022</div>
    <button class="show-desktop" aria-label="Show desktop"></button>
  </div>
</div>

<div class="statusbar">
  <span>To grab input, press Ctrl+G</span>
  <svg width="16" height="16" viewBox="0 0 16 16"><path d="M2 1h12v14H2z" fill="#fff" stroke="#2e3436" stroke-width="2"/><circle cx="8" cy="7" r="3" fill="none" stroke="#2e3436" stroke-width="2"/><path d="M5 7v4" stroke="#2e3436" stroke-width="2"/></svg>
  <svg width="16" height="16" viewBox="0 0 16 16"><circle cx="8" cy="7.500" r="7" fill="#ddd" stroke="#999"/><circle cx="7" cy="7" r="2" fill="#fff" stroke="#999"/><path d="M8 8h8v8H8z" fill="#cf1d1d"/><path d="m10 10 4 4m0-4-4 4" stroke="#fff" stroke-width="1.500"/></svg>
  <svg width="16" height="16" viewBox="0 0 16 16"><path d="M5 0h6v5H5zM0 11h6v5H0zM10 11h6v5h-6z" fill="#2e3436"/><path d="M8 5v3M2.500 11V8h11v3" fill="none" stroke="#2e3436"/></svg>
  <svg width="16" height="16" viewBox="0 0 16 16"><path d="M4 3H1v11h8v-2M7 11V2l3 3M13 1v14" fill="none" stroke="#2e3436" stroke-width="2"/><path d="M13 2h3M13 6h3M13 10h3M13 14h3" stroke="#2e3436"/><circle cx="6" cy="10" r="2" fill="#2e3436"/></svg>
  <svg width="16" height="16" viewBox="0 0 16 16"><path d="M3 3h12v8l-1 4H2V5z" fill="#f1c83c" stroke="#927514"/><path d="M6 6h7M6 9h7" stroke="#927514"/><circle cx="4" cy="3" r="3" fill="#c4222a"/></svg>
</div>

<footer class="dock">
  <button class="mint" aria-label="Menu"><svg width="32" height="32" viewBox="0 0 32 32"><circle cx="16" cy="16" r="14.500" fill="none" stroke="#e6e6e6" stroke-width="2.500"/><path d="M9 8v10q0 5 5 5h5q5 0 5-5v-3q0-3-2.500-3T19 15v4m0-4q0-3-2.500-3T14 15v4" fill="none" stroke="#e6e6e6" stroke-width="2.500"/></svg></button>
  <button class="desktop" aria-label="Show desktop"><svg width="32" height="32" viewBox="0 0 32 32"><path d="M1 4h30v25H1z" fill="#5a73c5"/><path d="M1 4h30v6H1z" fill="#4056a0"/><path d="M5 6h2v2H5z" fill="#fff"/></svg></button>
  <button aria-label="Firefox"><svg width="32" height="32" viewBox="0 0 32 32"><rect x="2" y="2" width="28" height="28" rx="5" fill="#ff7139"/><path d="M7 12c1-2 2-3 3-5l1 4c2-1 3-3 4-5 3 1 5 4 6 6l1-2c5 8 1 17-6 17S4 20 7 12z" fill="#fff"/><path d="M12 15c2-2 3-1 5-1 2 1 3 3 2 5-2 3-6 2-7 0z" fill="#ff7139"/></svg></button>
  <button aria-label="Terminal"><svg width="32" height="32" viewBox="0 0 32 32"><rect x="1.500" y="2" width="29" height="28" rx="4" fill="#202020" stroke="#111"/><text x="5" y="11" class="prompt">$_</text></svg></button>
  <button aria-label="Files"><svg width="32" height="32" viewBox="0 0 32 32"><path d="M4 4h10l3 2h11v6H4z" fill="#f7f7f7"/><path d="M1 8h30l-1 19H2z" fill="#5a73c5"/></svg></button>
  <button aria-label="Spotify"><svg width="32" height="32" viewBox="0 0 32 32"><rect x="2" y="2" width="28" height="28" rx="5" fill="#1fd35e"/><path d="M7 12q10-4 18 2M8 17q8-3 15 1.500M9 22q7-2.500 12.500 1" fill="none" stroke="#172b1d" stroke-width="3" stroke-linecap="round"/></svg></button>
  <button aria-label="Passwords"><svg width="32" height="32" viewBox="0 0 32 32"><rect x="2" y="2" width="28" height="28" rx="5" fill="#dededc"/><circle cx="16" cy="16" r="9" fill="#aa9b13" stroke="#534d13"/><path d="M16 13v10" stroke="#222" stroke-width="3"/><circle cx="16" cy="14" r="2.500" fill="#222"/></svg></button>
  <button aria-label="Noise"><svg width="32" height="32" viewBox="0 0 32 32"><rect width="32" height="32" filter="url(#fNoise)"/></svg></button>
  <button aria-label="Teams"><svg width="32" height="32" viewBox="0 0 32 32"><circle cx="17" cy="7" r="4.500" fill="#7b83eb"/><circle cx="25" cy="7" r="3" fill="#5059c9"/><path d="M14 13h14v12q-6 5-14 2z" fill="#7b83eb"/><path d="M1 10h15v15H1z" fill="#3f48b5"/><text x="5" y="22" class="teams-letter">T</text><path d="m8 30 23-13v7L20 31z" fill="#b68ce0"/></svg></button>
  <button aria-label="Text editor"><svg width="32" height="32" viewBox="0 0 32 32"><rect x="2" y="2" width="28" height="28" rx="5" fill="#a09bd6"/><path d="M9 7h14v19H9z" fill="#fff"/><path d="M11 11h10M11 14h10M11 17h7" stroke="#555"/></svg></button>
  <button class="dock-active" aria-label="VMware Player"><svg width="32" height="32" viewBox="0 0 32 32"><g fill="none" stroke="#f2b200" stroke-width="4"><path d="M2 13V2h10M20 2h10v10M30 20v10H20M3 3l9 9M29 3 19 13v6M21 21l8 8"/><path d="M11 15h7v4h5"/></g></svg></button>
  <div class="dock-tray">
    <div class="dock-tray-apps">
      <svg width="20" height="20" viewBox="0 0 20 20"><circle cx="10" cy="10" r="8.500" fill="#d6953c" stroke="#1a1a1a" stroke-width="2"/><path d="M2 12q3 8 11 6V9z" fill="#378b35"/><text x="5" y="15" class="tray-letter">P</text><path d="M11 11h9v9h-9z" fill="#f00"/></svg>
      <svg width="24" height="24" viewBox="0 0 24 24"><circle cx="12" cy="12" r="10.500" fill="#111" stroke="#fff" stroke-width="1.500"/><circle cx="12" cy="12" r="7" fill="none" stroke="#fff" stroke-width="2.500"/><path d="M12 8v8" stroke="#fff" stroke-width="3"/><path d="M14 15h9v7h-9z" fill="#000" stroke="#fff"/><path d="M16 15v-2q2.500-3 5 0v2" fill="none" stroke="#fff"/></svg>
      <svg width="24" height="24" viewBox="0 0 24 24"><circle cx="13" cy="4" r="3.500" fill="#4b53bc"/><circle cx="20" cy="5" r="2.500" fill="#3c449f"/><path d="M0 6h13v13H0z" fill="#3a43a4"/><path d="M10 9h12v8H10z" fill="#5059c9"/><text x="3" y="16" class="tray-t">T</text><circle cx="17" cy="16" r="7" fill="#c4314b"/><path d="M13.500 18c1.500-1 0-6 3.500-6s2 5 3.500 6z" fill="#fff"/><path d="M15.500 19.500h3" stroke="#fff" stroke-width="1.500"/></svg>
      <svg width="16" height="18" viewBox="0 0 16 18"><rect x="3" y="1" width="11" height="16" rx="5" fill="#ddd"/><path d="m5.500 6 5.500 5.500L8.500 14V4L11 6.500 5.500 12" fill="none" stroke="#222"/></svg>
      <svg width="18" height="18" viewBox="0 0 18 18"><path d="m8 1 7 3c0 6-2 10-7 13C3 14 1 10 1 4z" fill="#ccc"/><path d="m8 4 4 2c0 4-1 6-4 8z" fill="#333"/><circle cx="14" cy="14" r="3.300" fill="#e8743b"/></svg>
      <svg width="18" height="18" viewBox="0 0 18 18"><ellipse cx="9" cy="9" rx="8" ry="5" fill="none" stroke="#aaa"/><text x="3" y="11" class="tray-intel">intel</text></svg>
    </div>
    <svg width="16" height="16" viewBox="0 0 16 16"><path d="M0 5q8-7 16 0l-8 10z" fill="#777"/><path d="M1 6q7-6 14 0M3.500 9q4.500-4 9 0" fill="none" stroke="#ddd" stroke-width="2"/><path d="m5.500 11 2.500 3 2.500-3q-2.500-2-5 0z" fill="#ddd"/></svg>
    <svg width="16" height="16" viewBox="0 0 16 16"><path d="M0 5h3l5-4v14l-5-4H0z" fill="#ddd"/><path d="M10 5q2 3 0 6M12.500 2.500q4 5.500 0 11" fill="none" stroke="#ddd" stroke-width="1.500"/></svg>
    <svg width="16" height="16" viewBox="0 0 16 16"><path d="M2 3h3V1h4v2h3v4M7 15H2V3" fill="none" stroke="#ddd" stroke-width="2"/><path d="M4 6h5v2l-3 4H4z" fill="#ddd"/><path d="m11 6-3 5h3l-1 5 5-6h-3z" fill="#ddd"/></svg>
    <span class="host-clock">13:12</span>
  </div>
</footer>
</body>
</html>
```
FILE: styles.css
```css
* { box-sizing: border-box; }
body {
  margin: 0;
  height: 100vh;
  display: flex;
  flex-direction: column;
  overflow: hidden;
  border: 2px solid #cc0000;
  outline: 1px solid #6b1414;
  outline-offset: -3px;
  background: #fff;
  font-family: "DejaVu Sans", sans-serif;
}
button {
  padding: 0;
  border: 0;
  background: none;
  font: inherit;
  color: inherit;
}
button, a { display: flex; align-items: center; justify-content: center; }
a { color: inherit; text-decoration: none; }
svg { display: block; flex: none; }
.sprite { position: absolute; width: 0; height: 0; }
.icon { width: 32px; height: 32px; }

/* Host window */
.titlebar {
  flex: none;
  display: flex;
  align-items: center;
  height: 26px;
  padding-right: 8px;
  background: #2b2b2b;
  color: #dadada;
  font: 600 13px "Open Sans", sans-serif;
}
.titlebar-text { flex: 1; padding-left: 86px; text-align: center; }
.window-buttons { display: flex; gap: 12px; }
.menubar {
  flex: none;
  display: flex;
  gap: 16px;
  height: 26px;
  padding: 0 6px 2px;
  background: #f6f5f3;
  border-bottom: 1px solid #c9c5c1;
  color: #2e3436;
  font: 14px "Noto Sans", sans-serif;
}

/* Browser chrome */
.tabstrip {
  flex: none;
  display: flex;
  align-items: center;
  height: 34px;
  padding: 0 3px 0 7px;
  background: #dee1e6;
  font: 12px "Open Sans", sans-serif;
}
.tab {
  display: flex;
  align-items: center;
  gap: 8px;
  width: 240px;
  height: 34px;
  padding: 0 11px 0 12px;
  border-radius: 8px 8px 0 0;
  background: #fff;
  color: #45494d;
}
.tab-title { flex: 1; }
.favicon-letter { font: bold 13px "Open Sans", sans-serif; fill: #fff; }
.newtab { margin-left: 16px; }
.tabsearch { margin: 0 16px 0 auto; }
.guest-buttons {
  display: flex;
  align-self: flex-start;
  height: 18px;
  border: 1px solid #85898f;
  border-top: 0;
  border-radius: 0 0 4px 4px;
}
.guest-buttons button { width: 25px; }
.guest-buttons button + button { border-left: 1px solid #85898f; }
.guest-buttons button:last-child { width: 42px; }
.addressbar {
  flex: none;
  display: flex;
  align-items: center;
  gap: 16px;
  height: 37px;
  padding: 0 13px 1px;
  border-bottom: 1px solid #d5d7da;
  background: #fff;
}
.omnibox {
  flex: 1;
  display: flex;
  align-items: center;
  gap: 8px;
  height: 28px;
  margin: 0 -2px;
  padding: 0 10px;
  border-radius: 14px;
  background: #f1f3f4;
  color: #666a6e;
  font: 13px "Open Sans", sans-serif;
}
.omnibox-actions { display: flex; gap: 16px; }
.browser-actions { display: flex; align-items: center; gap: 13px; }
.url { flex: 1; justify-content: flex-start; }
.url span { color: #000; }

/* Web page */
.viewport { flex: 1; display: flex; min-height: 0; padding-left: 1px; }
.page { flex: 1; min-width: 0; display: flex; flex-direction: column; overflow: hidden; }
.banner {
  flex: none;
  display: flex;
  justify-content: space-between;
  height: 115px;
  padding: 20px 10px 10px 6px;
  background: #00a070;
}
.logo { overflow: visible; }
.logo text { font: 97px "Noto Sans", sans-serif; stroke-width: 4px; stroke-linejoin: round; }
.logo text.logo-a { font-size: 130px; stroke-width: 2px; }
.logo-white, .logo-green { filter: drop-shadow(0 0 1px #075f43); }
.logo-white { fill: #fff; stroke: #fff; }
.logo-green { fill: #3ab54a; stroke: #3ab54a; }
.urgent {
  gap: 8px;
  height: 49px;
  margin-top: 19px;
  padding: 0 15px;
  border-radius: 9px;
  background: #12906a;
  color: #c9ebe0;
  font-size: 28px;
  font-weight: bold;
}
.urgent svg { margin-bottom: 8px; }
.urgent span { padding-top: 4px; }
.product { align-self: flex-end; color: #fff; font-size: 28px; font-weight: bold; line-height: 32px; }
.toolbar {
  flex: none;
  display: flex;
  gap: 7px;
  height: 53px;
  padding: 10px 6px 11px 4px;
  background: #efefef;
}
.toolbar > a { height: 32px; }
.separator { width: 2px; height: 36px; margin-top: -4px; background: #3ab54a; }
.user { margin-left: auto; padding-top: 7px; color: #444; font-size: 20px; line-height: 32px; }
.mute { height: 28px; margin: 0 2px 0 5px; }
.panel {
  flex: 1;
  display: flex;
  margin: 16px 12px 0 14px;
  border: 2px solid #3ab54a;
  border-bottom: 0;
}
.points { flex: none; width: 534px; padding: 4px 6px 0 4px; }
.heading { display: flex; align-items: baseline; gap: 8px; }
.heading h2 { margin: 0; color: #444; font-size: 26px; line-height: 28px; }
.tree {
  margin: 0;
  padding: 0 0 0 14px;
  overflow: hidden;
  list-style: none;
  font: 22px "Liberation Sans", sans-serif;
}
.tree li { display: flex; align-items: center; height: 36px; white-space: nowrap; }
.tree span { margin-left: 6px; }
.branch {
  flex: none;
  width: 22px;
  height: 36px;
  margin-right: 4px;
  background: linear-gradient(#999, #999) 0 0 / 2px 100% no-repeat, linear-gradient(#999, #999) 0 50% / 22px 2px no-repeat;
}
.tree li:first-child .branch { background-position: 0 100%, 0 50%; background-size: 2px 50%, 22px 2px; }
.tree li:last-child .branch { background-size: 2px 50%, 22px 2px; }
.add { margin-left: 12px; padding-top: 4px; }
.add:disabled { opacity: .2; }
.add svg { width: 20px; height: 18px; }
.hscroll { display: flex; margin-top: 1px; background: #f1f1f1; }
.hscroll-track { flex: 1; padding: 2px 0; }
.hscroll-thumb { width: 89%; height: 13px; background: #c1c1c1; }
.divider { flex: none; width: 2px; margin-top: 10px; background: #3ab54a; }
.watch { flex: 1; padding: 4px 19px 0 6px; }
.watch-head { display: flex; align-items: flex-end; gap: 7px; height: 45px; }
.watch-head .heading { flex: 1; padding-bottom: 4px; }
.picker { position: relative; }
.picker select {
  width: 289px;
  height: 41px;
  padding: 0 12px;
  appearance: none;
  border: 2px solid #3ab54a;
  border-radius: 0;
  background: #fff;
  color: #333;
  font: 22px "DejaVu Sans", sans-serif;
}
.picker svg { position: absolute; right: 10px; top: 14px; pointer-events: none; }
.actions { display: flex; align-self: flex-start; gap: 7px; }
.watch-table {
  width: calc(100% - 8px);
  margin: -1px 0 0 4px;
  border-collapse: collapse;
  table-layout: fixed;
  font-size: 22px;
}
.watch-table td, .watch-table th { padding: 0; text-align: left; }
.col-tool { width: 48px; }
.col-value { width: 112px; }
.col-check { width: 39px; }
.col-icons { width: 108px; }
.point { height: 52px; }
.point .tool { padding: 10px 0 0 7px; vertical-align: top; }
.tool svg { width: 24px; height: 24px; }
.point input { display: block; width: 26px; height: 26px; margin: 0; accent-color: #0075ff; }
.point .tools { padding-top: 6px; vertical-align: top; }
.tools div { display: flex; align-items: center; }
.tools .icon { margin-right: 7px; }
.tools button { padding-top: 3px; }
.tools button svg { width: 14px; height: 14px; }
.tools .remove { margin-left: 15px; }
.note { height: 45px; }
.note td { vertical-align: top; }
.note div { display: flex; align-items: baseline; gap: 7px; height: 43px; padding: 1px 0 0 32px; }
.watch-table tbody:not(:last-child) .note td { border-bottom: 2px solid #3ab54a; }
.vscroll { flex: none; display: flex; flex-direction: column; width: 16px; background: #f1f1f1; }
.vscroll-track { flex: 1; padding: 0 1px 0 2px; }
.vscroll-thumb { height: 60.5%; background: #c1c1c1; }

/* Guest taskbar */
.taskbar {
  flex: none;
  display: flex;
  align-items: center;
  height: 40px;
  padding-left: 8px;
  border-top: 1px solid #3c485c;
  background: linear-gradient(90deg, #8092a9 0, #8092a9 40px, #a6c0dd 80px);
}
.explorer { margin-left: 28px; }
.task-active {
  width: 60px;
  height: 38px;
  margin-left: 16px;
  border: 1px solid #4b5a70;
  border-radius: 3px;
  background: linear-gradient(135deg, #f4f7fb, #c9d6e6 60%, #e6edf5);
}
.tray {
  display: flex;
  align-items: center;
  gap: 8px;
  align-self: stretch;
  margin-left: auto;
  padding-left: 32px;
  background: linear-gradient(90deg, #a6c0dd, #8092a9 32px);
  color: #fff;
}
.guest-clock { margin-left: 6px; font: 11px/16px "Open Sans", sans-serif; text-align: center; }
.show-desktop { align-self: stretch; width: 14px; margin-left: -2px; border-left: 1px solid #c7d0dc; background: linear-gradient(135deg, #7d8da2, #4a596d); }

/* Host status bar and panel */
.statusbar {
  flex: none;
  display: flex;
  align-items: center;
  gap: 4px;
  height: 37px;
  padding: 0 11px 0 12px;
  border-top: 1px solid #cfcac5;
  background: #f6f5f3;
  color: #2e3436;
  font: 14px "Noto Sans", sans-serif;
}
.statusbar span { flex: 1; }
.dock { flex: none; display: flex; align-items: center; height: 39px; padding-left: 3px; border-top: 1px solid #1c1c1c; background: #2e2e2e; }
.dock > button { width: 40px; height: 38px; }
.dock > .mint { width: 32px; margin-right: 9px; }
.dock > .desktop { margin-right: 3px; }
.dock > .dock-active { width: 38px; background: #545454; }
.dock-tray { display: flex; align-items: center; gap: 10px; margin-left: auto; padding-right: 3px; }
.dock-tray-apps { display: flex; align-items: center; gap: 8px; }
.host-clock { color: #dedede; font: bold 13px "Noto Sans", sans-serif; }
.prompt { font: bold 8px "DejaVu Sans Mono", monospace; fill: #fff; }
.teams-letter { font: bold 12px "Open Sans", sans-serif; fill: #fff; }
.tray-letter { font: bold 13px "Open Sans", sans-serif; fill: #fff; }
.tray-t { font: bold 10px "Open Sans", sans-serif; fill: #fff; }
.tray-intel { font: 6px "Open Sans", sans-serif; fill: #ddd; }
```
